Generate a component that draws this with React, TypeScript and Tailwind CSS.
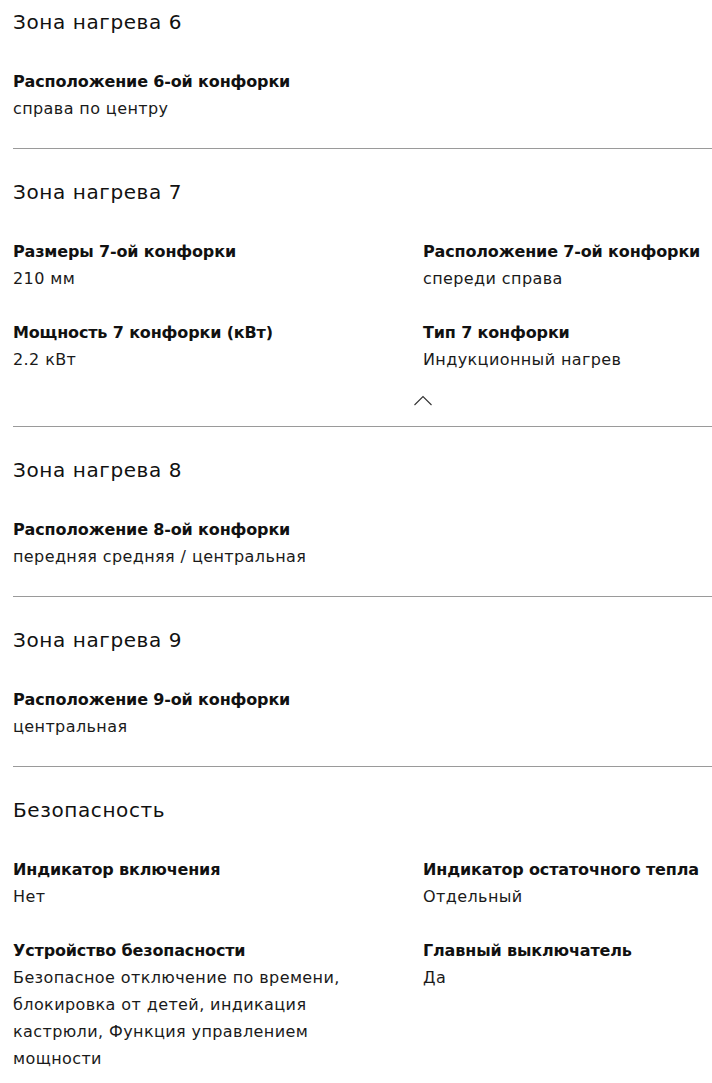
import React from 'react';

type Spec = { label: string; value: string };

type Section = { title: string; specs: Spec[]; collapse?: boolean };

const sections: Section[] = [
  { title: 'Зона нагрева 6', specs: [{ label: 'Расположение 6-ой конфорки', value: 'справа по центру' }] },
  {
    title: 'Зона нагрева 7',
    collapse: true,
    specs: [
      { label: 'Размеры 7-ой конфорки', value: '210 мм' },
      { label: 'Расположение 7-ой конфорки', value: 'спереди справа' },
      { label: 'Мощность 7 конфорки (кВт)', value: '2.2 кВт' },
      { label: 'Тип 7 конфорки', value: 'Индукционный нагрев' },
    ],
  },
  { title: 'Зона нагрева 8', specs: [{ label: 'Расположение 8-ой конфорки', value: 'передняя средняя / центральная' }] },
  { title: 'Зона нагрева 9', specs: [{ label: 'Расположение 9-ой конфорки', value: 'центральная' }] },
  {
    title: 'Безопасность',
    specs: [
      { label: 'Индикатор включения', value: 'Нет' },
      { label: 'Индикатор остаточного тепла', value: 'Отдельный' },
      {
        label: 'Устройство безопасности',
        value: 'Безопасное отключение по времени, блокировка от детей, индикация кастрюли, Функция управлением мощности',
      },
      { label: 'Главный выключатель', value: 'Да' },
    ],
  },
];

export default function App() {
  return (
    <div className="bg-white text-[#111] pl-[13px] pt-[7px] font-['DejaVu_Sans',sans-serif]">
      {sections.map((section, i) => (
        <section key={section.title} className={i > 0 ? 'border-t border-[#9a9a9a] pt-[28px]' : ''}>
          <h2 className="text-[20px] leading-[30px] font-normal tracking-[0.6px]">{section.title}</h2>
          <div className="grid grid-cols-[410px_1fr] gap-y-[27px] mt-[31px] pb-[26px]">
            {section.specs.map((spec) => (
              <div key={spec.label}>
                <div className="text-[16px] leading-[27px] font-bold tracking-[-0.15px] whitespace-nowrap">
                  {spec.label}
                </div>
                <div className="text-[16px] leading-[27px] tracking-[0.4px] max-w-[350px] text-[#1a1a1a]">
                  {spec.value}
                </div>
              </div>
            ))}
          </div>
          {section.collapse && (
            <div className="grid grid-cols-[400px_1fr] -mt-[4px] pb-[20px]">
              <div />
              <svg width="20" height="11" viewBox="0 0 20 11" fill="none" stroke="#333" strokeWidth="1.1">
                <path d="M1.5 10 L10 1.5 L18.5 10" />
              </svg>
            </div>
          )}
        </section>
      ))}
    </div>
  );
}
